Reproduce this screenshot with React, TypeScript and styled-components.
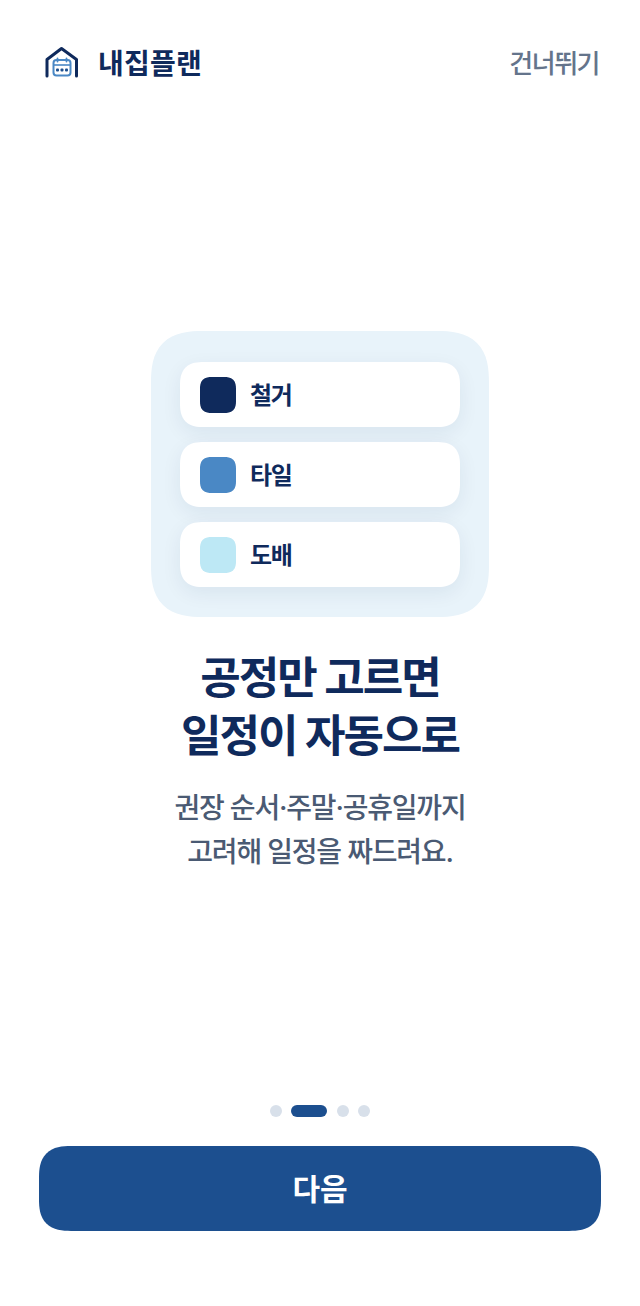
import React from 'react'
import styled, { createGlobalStyle } from 'styled-components'

const STEPS = [
  { label: '철거', color: '#0f2a5c' },
  { label: '타일', color: '#4a88c5' },
  { label: '도배', color: '#bde8f5' },
]

const App: React.FC = () => {
  return (
    <>
      <GlobalStyle />
      <Screen>
        <Header>
          <Brand>
            <svg width="36" height="36" viewBox="0 0 36 36" fill="none">
              <path d="M3 31V14.5L17.5 3.5L32.5 14.5V31" stroke="#0f2a5c" strokeWidth="3" strokeLinecap="round" strokeLinejoin="round" />
              <rect x="9.5" y="15" width="17" height="15.5" rx="3" stroke="#4a88c5" strokeWidth="2" />
              <path d="M9.5 20H26.5" stroke="#4a88c5" strokeWidth="1.6" />
              <path d="M13.5 13.5V16.5M22.5 13.5V16.5" stroke="#4a88c5" strokeWidth="1.8" strokeLinecap="round" />
              <rect x="12" y="23.5" width="3" height="3" rx="1" fill="#1c4f8f" />
              <rect x="16.5" y="23.5" width="3" height="3" rx="1" fill="#1c4f8f" />
              <rect x="21" y="23.5" width="3" height="3" rx="1" fill="#1c4f8f" />
            </svg>
            <BrandName>내집플랜</BrandName>
          </Brand>
          <Skip>건너뛰기</Skip>
        </Header>
        <Main>
          <Panel>
            {STEPS.map((step) => (
              <StepCard key={step.label}>
                <Swatch $color={step.color} />
                <StepLabel>{step.label}</StepLabel>
              </StepCard>
            ))}
          </Panel>
          <Title>
            공정만 고르면
            <br />
            일정이 자동으로
          </Title>
          <Description>
            권장 순서·주말·공휴일까지
            <br />
            고려해 일정을 짜드려요.
          </Description>
        </Main>
        <Footer>
          <Dots>
            <Dot />
            <Dot $active />
            <Dot />
            <Dot />
          </Dots>
          <NextButton>다음</NextButton>
        </Footer>
      </Screen>
    </>
  )
}

const GlobalStyle = createGlobalStyle`
  body {
    margin: 0;
    background: #fff;
    font-family: Inter, 'Noto Sans CJK KR', 'Noto Sans', sans-serif;
  }
`

const Screen = styled.div`
  width: 640px;
  height: 1306px;
  display: flex;
  flex-direction: column;
  background: #fff;
`

const Header = styled.header`
  display: flex;
  align-items: center;
  justify-content: space-between;
  padding: 45px 41px 0 44px;
  height: 36px;
`

const Brand = styled.div`
  display: flex;
  align-items: center;
  gap: 18px;
`

const BrandName = styled.span`
  padding-bottom: 3px;
  font-size: 28px;
  font-weight: 700;
  letter-spacing: 0.2px;
  color: #0f2a5c;
`

const Skip = styled.button`
  border: none;
  background: none;
  padding: 0 0 3px;
  font-family: inherit;
  font-size: 26px;
  font-weight: 500;
  letter-spacing: -1.5px;
  color: #64748b;
`

const Main = styled.main`
  display: flex;
  flex-direction: column;
  align-items: center;
  padding-top: 250px;
`

const Panel = styled.div`
  width: 338px;
  height: 286px;
  box-sizing: border-box;
  padding: 31px 29px;
  display: flex;
  flex-direction: column;
  gap: 15px;
  border-radius: 52px;
  corner-shape: superellipse(1.4);
  background: #e8f3fa;
`

const StepCard = styled.div`
  height: 65px;
  flex: none;
  display: flex;
  align-items: center;
  gap: 14px;
  padding-left: 20px;
  border-radius: 24px;
  corner-shape: superellipse(1.4);
  background: #fff;
  box-shadow: 0 6px 20px rgba(15, 42, 92, 0.07);
`

const Swatch = styled.div<{ $color: string }>`
  width: 36px;
  height: 36px;
  border-radius: 12px;
  corner-shape: superellipse(1.4);
  background: ${(p) => p.$color};
`

const StepLabel = styled.span`
  padding-bottom: 3px;
  font-size: 24px;
  font-weight: 700;
  letter-spacing: -1.3px;
  color: #0f2a5c;
`

const Title = styled.h1`
  margin: 32px 0 0;
  font-size: 44px;
  line-height: 58px;
  font-weight: 700;
  letter-spacing: -2px;
  text-align: center;
  color: #0f2a5c;
`

const Description = styled.p`
  margin: 21px 0 0;
  font-size: 28px;
  line-height: 44px;
  font-weight: 500;
  letter-spacing: -1.2px;
  text-align: center;
  color: #4a5a73;
`

const Footer = styled.footer`
  margin-top: auto;
  padding: 0 39px 75px;
  display: flex;
  flex-direction: column;
  align-items: center;
  gap: 29px;
`

const Dots = styled.div`
  display: flex;
  align-items: center;
  gap: 9.5px;
`

const Dot = styled.span<{ $active?: boolean }>`
  width: ${(p) => (p.$active ? '36px' : '12px')};
  height: 12px;
  border-radius: 6px;
  background: ${(p) => (p.$active ? '#1c4f8f' : '#d8e0ea')};
`

const NextButton = styled.button`
  width: 100%;
  height: 85px;
  border: none;
  border-radius: 32px;
  corner-shape: superellipse(1.4);
  padding: 0 0 4px;
  background: #1c4f8f;
  color: #fff;
  font-family: inherit;
  font-size: 30px;
  font-weight: 700;
`

export default App
